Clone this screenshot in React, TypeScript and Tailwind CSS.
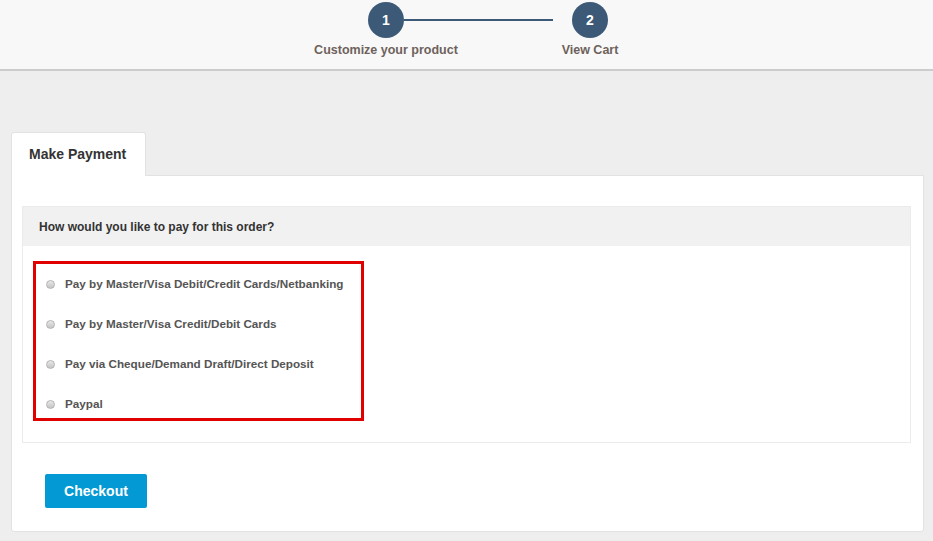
export default function App() {
  const options = [
    "Pay by Master/Visa Debit/Credit Cards/Netbanking",
    "Pay by Master/Visa Credit/Debit Cards",
    "Pay via Cheque/Demand Draft/Direct Deposit",
    "Paypal",
  ];

  return (
    <div className="min-h-[541px] w-full bg-[#eeeeee] font-['Liberation_Sans',Arial,sans-serif]">
      {/* Stepper header */}
      <div className="h-[71px] bg-[#f8f8f8] border-b-2 border-[#cccccc]">
        <div className="relative flex pl-[306px] pt-[2px]">
          {/* connector line */}
          <div className="absolute left-[404px] top-[19px] w-[149px] h-[2px] bg-[#3c5a78]" />
          <div className="w-[160px] flex flex-col items-center">
            <div className="w-[36px] h-[36px] rounded-full bg-[#3c5a78] text-white text-[14px] font-bold flex items-center justify-center">1</div>
            <span className="mt-[3px] whitespace-nowrap text-[12.5px] font-semibold text-[#6e625c]">Customize your product</span>
          </div>
          <div className="ml-[74px] w-[100px] flex flex-col items-center">
            <div className="w-[36px] h-[36px] rounded-full bg-[#3c5a78] text-white text-[14px] font-bold flex items-center justify-center">2</div>
            <span className="mt-[3px] whitespace-nowrap text-[12.5px] font-semibold text-[#6e625c]">View Cart</span>
          </div>
        </div>
      </div>

      <div className="pl-[11px] pr-[9px] pt-[61px] pb-[10px]">
        {/* Tab */}
        <div className="w-[135px] h-[44px] bg-white border border-b-0 border-[#e2e2e2] rounded-t-[3px] flex items-center pl-[17px] text-[14px] font-semibold text-[#333333] -mb-[1px] relative z-10">
          Make Payment
        </div>

        {/* Panel */}
        <div className="bg-white border border-[#e2e2e2] rounded-b-[3px] pt-[30px] pl-[10px] pr-[12px] pb-[23px]">
          <div className="border border-[#ebebeb]">
            <div className="h-[39px] bg-[#f1f1f1] flex items-center pl-[16px] text-[12px] font-semibold text-[#333333]">
              How would you like to pay for this order?
            </div>
            <div className="pt-[15px] pb-[21px] pl-[10px]">
              <div className="w-[331px] border-[3px] border-[#e00000] pt-[9px] pb-[3px] pl-[10px] flex flex-col gap-[18px]">
                {options.map((o) => (
                  <label key={o} className="h-[22px] flex items-center gap-[10px] text-[11.7px] font-semibold text-[#555555]">
                    <span className="w-[9px] h-[9px] rounded-full border border-[#b5b5b5] bg-gradient-to-b from-[#e8e8e8] to-[#c4c4c4] shrink-0" />
                    {o}
                  </label>
                ))}
              </div>
            </div>
          </div>

          <button className="mt-[31px] ml-[23px] w-[102px] h-[34px] rounded-[2px] bg-[#0399d4] text-white text-[14px] font-bold">
            Checkout
          </button>
        </div>
      </div>
    </div>
  );
}
